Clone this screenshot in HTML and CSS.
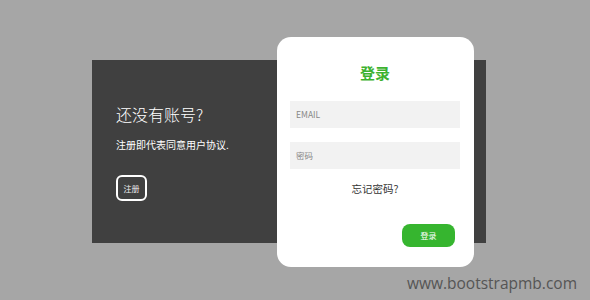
FILE: index.html
```html
<!doctype html>
<html>
    <head>
        <meta charset="utf-8">
        <title>登录</title>
        <link rel="stylesheet" href="styles.css">
    </head>
    <body>
    <div class="stage">
        <div class="panel">
            <div class="intro">
                <div class="intro-title">还没有账号?</div>
                <div class="intro-text">注册即代表同意用户协议.</div>
                <button class="btn-outline">注册</button>
            </div>

            <div class="card">
                <div class="card-title">登录</div>
                <div class="field">EMAIL</div>
                <div class="field">密码</div>
                <div class="forgot">忘记密码?</div>
                <div class="actions">
                    <button class="btn-green">登录</button>
                </div>
            </div>
        </div>
    </div>
    <div class="mark">www.bootstrapmb.com</div>
</body>
</html>
```

FILE: styles.css
```css
body {
    margin: 0;
    background-color: #a6a6a6;
    font-family: "Noto Sans CJK SC", "Noto Sans", sans-serif;
}
div.stage {
    padding: 60px 0 0 92px;
}
div.panel {
    position: relative;
    width: 394px;
    height: 183px;
    background-color: #404040;
}
div.intro {
    padding: 44px 0 0 24px;
    color: #fff;
}
div.intro-title {
    font-size: 16px;
    line-height: 20px;
    font-weight: 300;
}
div.intro-text {
    margin-top: 14px;
    font-size: 10px;
    line-height: 14px;
}
button.btn-outline {
    margin-top: 23px;
    width: 31px;
    height: 26px;
    padding: 0;
    border: 2px solid #fff;
    border-radius: 6px;
    background: none;
    color: #eee;
    font-family: inherit;
    font-size: 8px;
}
div.card {
    position: absolute;
    left: 185px;
    top: -23px;
    width: 197px;
    height: 230px;
    box-sizing: border-box;
    padding: 26px 14px 0 13px;
    background-color: #fff;
    border-radius: 14px;
}
div.card-title {
    text-align: center;
    color: #3cb22f;
    font-size: 15px;
    line-height: 20px;
    font-weight: bold;
    margin-bottom: 18px;
}
div.field {
    height: 27px;
    line-height: 27px;
    padding-left: 6px;
    margin-bottom: 14px;
    background-color: #f2f2f2;
    color: #888;
    font-size: 8.5px;
}
div.forgot {
    margin-top: -1px;
    text-align: center;
    color: #333;
    font-size: 10.5px;
    line-height: 14px;
}
div.actions {
    display: flex;
    justify-content: flex-end;
    margin-top: 28px;
    padding-right: 5px;
}
button.btn-green {
    width: 53px;
    height: 23px;
    padding: 0;
    border: none;
    border-radius: 8px;
    background-color: #36b52f;
    color: #fff;
    font-family: inherit;
    font-size: 8px;
}
div.mark {
    margin-top: 30px;
    padding-right: 13px;
    text-align: right;
    color: #555;
    font-family: "Open Sans", sans-serif;
    font-size: 15.5px;
    line-height: 20px;
}
```
